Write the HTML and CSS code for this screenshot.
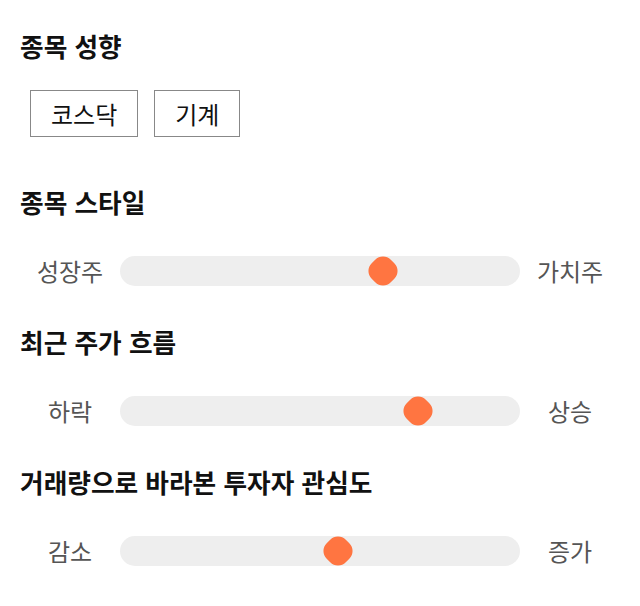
FILE: index.html
```html
<!DOCTYPE html>
<html lang="ko">
<head>
    <meta charset="UTF-8">
    <meta name="viewport" content="width=device-width, initial-scale=1.0">
    <title>종목 성향</title>
    <link rel="stylesheet" href="styles.css">
</head>
<body>
    <div class="container">
        <div class="section section-tags">
            <h2>종목 성향</h2>
            <div class="tags">
                <span class="tag">코스닥</span>
                <span class="tag">기계</span>
            </div>
        </div>

        <div class="section">
            <h2>종목 스타일</h2>
            <div class="scale">
                <span class="scale-label">성장주</span>
                <div class="track"><span class="thumb" style="left: 65.75%"></span></div>
                <span class="scale-label">가치주</span>
            </div>
        </div>

        <div class="section">
            <h2>최근 주가 흐름</h2>
            <div class="scale">
                <span class="scale-label">하락</span>
                <div class="track"><span class="thumb" style="left: 74.5%"></span></div>
                <span class="scale-label">상승</span>
            </div>
        </div>

        <div class="section">
            <h2>거래량으로 바라본 투자자 관심도</h2>
            <div class="scale">
                <span class="scale-label">감소</span>
                <div class="track"><span class="thumb" style="left: 54.5%"></span></div>
                <span class="scale-label">증가</span>
            </div>
        </div>
    </div>
</body>
</html>
```

FILE: styles.css
```css
body {
    margin: 0;
    padding: 0;
    background-color: #fff;
    color: #111;
    font-family: "Noto Sans CJK KR", "Noto Sans", sans-serif;
}
.container {
    padding: 30px 20px 0;
}
.section {
    margin-bottom: 30px;
}
.section-tags {
    margin-bottom: 49px;
}
h2 {
    margin: 0 0 28px;
    font-size: 25.7px;
    line-height: 32px;
    font-weight: bold;
    color: #111;
}
.tags {
    display: flex;
    gap: 16px;
    padding-left: 10px;
}
.tag {
    display: block;
    height: 45px;
    line-height: 45px;
    padding: 0 20px;
    border: 1px solid #888;
    font-size: 24px;
    color: #111;
}
.scale {
    display: flex;
    align-items: center;
    padding: 10px 0;
}
.scale-label {
    width: 100px;
    text-align: center;
    font-size: 24px;
    line-height: 30px;
    color: #555;
}
.track {
    position: relative;
    width: 400px;
    height: 30px;
    border-radius: 15px;
    background-color: #eee;
}
.thumb {
    position: absolute;
    top: 50%;
    width: 27px;
    height: 27px;
    border-radius: 11px;
    background-color: #ff7541;
    transform: translate(-50%, -50%) rotate(45deg);
}
```
